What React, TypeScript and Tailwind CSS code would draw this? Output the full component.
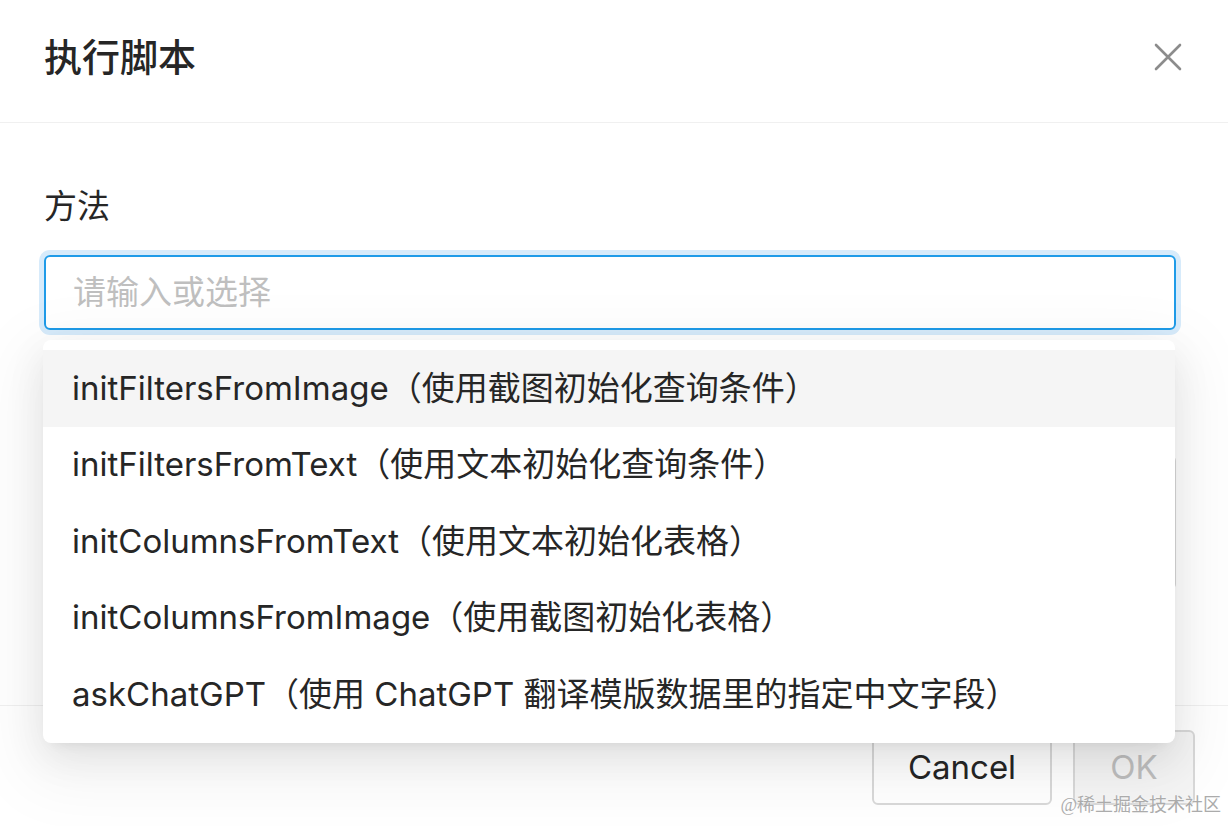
const items = [
  'initFiltersFromImage（使用截图初始化查询条件）',
  'initFiltersFromText（使用文本初始化查询条件）',
  'initColumnsFromText（使用文本初始化表格）',
  'initColumnsFromImage（使用截图初始化表格）',
  'askChatGPT（使用 ChatGPT 翻译模版数据里的指定中文字段）',
];

const App = () => {
  return (
    <div
      className="relative w-[1228px] h-[826px] overflow-hidden bg-white text-[#262626]"
      style={{ fontFamily: 'Inter, "Noto Sans CJK SC", sans-serif' }}
    >
      {/* Header */}
      <div className="h-[123px] border-b border-[#f0f0f0] flex items-center justify-between pl-[44px] pr-[46px]">
        <div className="text-[38px] font-medium leading-none pb-[8px]">执行脚本</div>
        <svg width="28" height="28" viewBox="0 0 28 28" className="mb-[8px]">
          <path d="M2 2L26 26M26 2L2 26" stroke="#8c8c8c" strokeWidth="2.6" strokeLinecap="round" />
        </svg>
      </div>

      {/* Body */}
      <div className="h-[582px] px-[44px] pt-[57px]">
        <div className="h-[53px] leading-[53px] text-[33px]">方法</div>
        <div className="mt-[22px] h-[75px] w-[1132px] rounded-[6px] border-2 border-[#1f9be8] shadow-[0_0_0_5px_#d7ebfb] flex items-center px-[27px]">
          <span className="text-[33px] text-[#bfbfbf]">请输入或选择</span>
        </div>
        <div className="mt-[125px] h-[135px] w-[1132px] rounded-[6px] border-2 border-[#d9d9d9]"></div>
      </div>

      {/* Footer */}
      <div className="border-t border-[#f0f0f0] pt-[24px] pr-[33px] flex justify-end gap-[21px]">
        <div className="h-[75px] w-[180px] rounded-[6px] border-2 border-[#d9d9d9] bg-white flex items-center justify-center text-[33px] text-[#262626]">
          Cancel
        </div>
        <div className="h-[75px] w-[122px] rounded-[6px] border-2 border-[#d9d9d9] bg-[#f5f5f5] flex items-center justify-center text-[33px] text-[#bfbfbf]">
          OK
        </div>
      </div>

      {/* Dropdown */}
      <div className="absolute left-[43px] top-[340px] w-[1132px] py-[10px] rounded-[8px] bg-white shadow-[0_7px_14px_-10px_rgba(0,0,0,0.12),0_14px_38px_0_rgba(0,0,0,0.08),0_21px_67px_19px_rgba(0,0,0,0.05)]">
        {items.map((t, i) => (
          <div
            key={t}
            className={
              'h-[76.5px] flex items-center px-[29px] text-[33px] text-[#262626] whitespace-nowrap ' +
              (i === 0 ? 'bg-[#f5f5f5]' : '')
            }
          >
            {t}
          </div>
        ))}
      </div>

      {/* Watermark */}
      <div
        className="absolute right-[7px] bottom-[7px] text-[18px] text-[#ababab] [text-shadow:0_0_2px_#fff]"
        style={{ fontFamily: '"Liberation Serif", "Noto Sans CJK SC", serif' }}
      >
        @稀土掘金技术社区
      </div>
    </div>
  );
};

export default App;
